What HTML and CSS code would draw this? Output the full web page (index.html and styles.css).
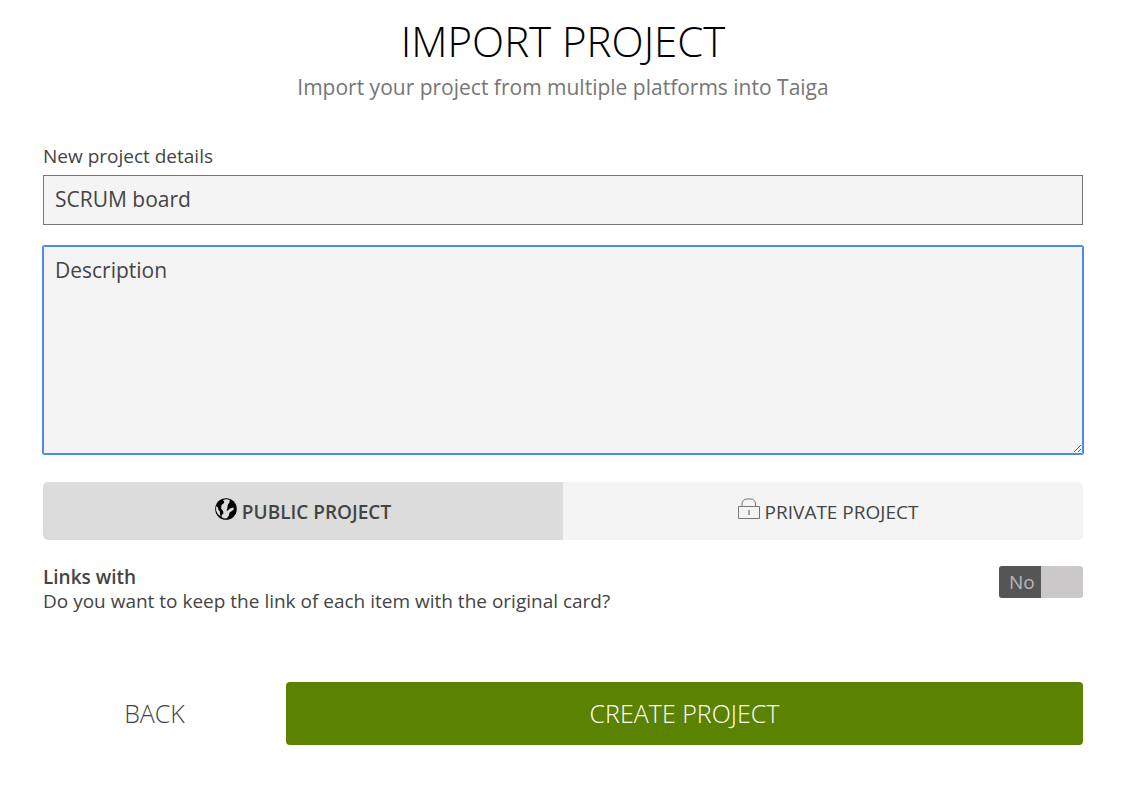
FILE: index.html
```html
<!DOCTYPE html>
<html lang="en">
<head>
<meta charset="utf-8">
<meta name="viewport" content="width=device-width, initial-scale=1">
<title>Import project</title>
<link rel="stylesheet" href="styles.css">
</head>
<body>
<main class="page">
  <header class="intro">
    <h1 class="title">IMPORT PROJECT</h1>
    <p class="subtitle">Import your project from multiple platforms into Taiga</p>
  </header>
  <form class="form">
    <label class="label" for="name">New project details</label>
    <input class="field" id="name" type="text" value="SCRUM board">
    <textarea class="field description" aria-label="Description" placeholder="Description"></textarea>
    <div class="privacy" role="radiogroup" aria-label="Project privacy">
      <label class="choice">
        <input class="hidden-input" type="radio" name="privacy" checked>
        <svg class="icon" viewBox="0 0 22 22" aria-hidden="true">
          <circle cx="11" cy="11" r="10.8" fill="#000"/>
          <path fill="#dcdcdc" d="M8 2C10 1.100 12.500 1 14.800 2L14.300 4.800 12.700 7 12.400 10 11.500 12.300 12.700 12.700 15 10.500 18.500 9.400 18.800 11.400 16.500 13.300 14.700 14.300 13.900 17.500 12 20.300 9 20.500 6.700 19.200 6.600 17.300 8.500 15.200 8 12.800 6.100 10.800 6.500 7 9 5 9.200 3.700Z"/>
          <path fill="#dcdcdc" d="M1.100 8.300 2.900 9.300 3.400 11.800 5 13.800 4.900 16.200 5.900 18.500 2.700 16 1.100 12.600Z"/>
        </svg>
        <span>PUBLIC PROJECT</span>
      </label>
      <label class="choice choice-private">
        <input class="hidden-input" type="radio" name="privacy">
        <svg class="icon" viewBox="0 0 22 22" fill="none" stroke="#777" aria-hidden="true">
          <path d="M.5 8.500h21v12H.5zM4 8.500V6c0-3 2-5 5-5h3.500c3 0 5 2 5 5v2.500"/>
          <path d="M11 12v5" stroke-width="1.300"/>
        </svg>
        <span>PRIVATE PROJECT</span>
      </label>
    </div>
    <div class="links">
      <label class="links-text" for="links"><strong>Links with</strong><span>Do you want to keep the link of each item with the original card?</span></label>
      <label class="toggle">
        <input class="hidden-input" id="links" type="checkbox">
        <span class="toggle-text">No</span>
      </label>
    </div>
    <div class="actions">
      <button class="back" type="button">BACK</button>
      <button class="create" type="submit">CREATE PROJECT</button>
    </div>
  </form>
</main>
</body>
</html>
```
FILE: styles.css
```css
* { box-sizing: border-box; }
body {
  margin: 0;
  background: #fff;
  color: #444;
  font: 19px/24px "Open Sans", sans-serif;
}
.page { padding: 13px 57px 32px 43px; }
.intro { text-align: center; }
.title {
  margin: 0;
  color: #000;
  font-size: 42px;
  font-weight: 300;
  line-height: 56px;
}
.subtitle {
  margin: 3px 0 0;
  color: #767676;
  font-size: 21px;
  line-height: 30px;
}
.form { display: flex; flex-direction: column; margin-top: 42px; }
.label { margin-bottom: 7px; }
.field {
  width: 100%;
  margin: 0;
  padding: 8px 11px 10px;
  border: 1px solid #777;
  border-radius: 0;
  background: #f4f4f4;
  color: #444;
  font: 21px/30px "Open Sans", sans-serif;
}
.field::placeholder { color: #444; opacity: 1; }
.description {
  display: block;
  height: 208px;
  margin-top: 21px;
  border-color: #4d8ce6;
  outline: 1px solid #4d8ce6;
  border-radius: 1px;
  resize: vertical;
}
.hidden-input {
  position: absolute;
  opacity: 0;
  pointer-events: none;
}
.privacy {
  display: grid;
  grid-template-columns: 1fr 1fr;
  margin-top: 28px;
  border-radius: 5px;
  overflow: hidden;
}
.choice {
  display: flex;
  align-items: center;
  justify-content: center;
  gap: 5px;
  height: 58px;
  background: #f4f4f4;
}
.choice-private { padding-left: 10px; }
.choice:has(:checked) { background: #dcdcdc; font-weight: 600; }
.choice span { padding-top: 2px; }
.icon { width: 22px; height: 22px; margin-bottom: 5px; }
.links {
  display: flex;
  justify-content: space-between;
  align-items: flex-start;
  margin-top: 25px;
}
.links-text { display: flex; flex-direction: column; }
.links-text strong { font-weight: 600; }
.toggle {
  display: flex;
  width: 84px;
  height: 32px;
  margin-top: 1px;
  border-radius: 3px;
  overflow: hidden;
  background: #cbc8c9;
}
.toggle-text {
  width: 50%;
  padding-left: 10px;
  background: #555;
  color: #b8b8b8;
  line-height: 32px;
}
.actions {
  display: grid;
  grid-template-columns: 223px 1fr;
  gap: 20px;
  margin-top: 69px;
}
.back, .create {
  height: 63px;
  padding: 0 0 2px;
  border: 0;
  border-radius: 4px;
  background: none;
  color: #444;
  font: 300 25px/34px "Open Sans", sans-serif;
}
.create { background: #5b8200; color: #fff; }
```
